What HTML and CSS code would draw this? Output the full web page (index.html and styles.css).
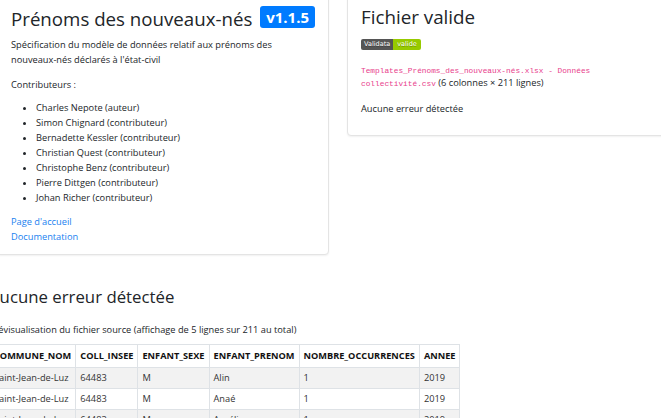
FILE: index.html
```html
<!DOCTYPE html>
<html lang="fr">
<head>
<meta charset="utf-8">
<title>Prénoms des nouveaux-nés</title>
<link rel="stylesheet" href="styles.css">
</head>
<body>
<div class="page">
  <div class="top">
    <section class="card card-left">
      <h1 class="title">Prénoms des nouveaux-nés <span class="version">v1.1.5</span></h1>
      <p class="desc">Spécification du modèle de données relatif aux prénoms des nouveaux-nés déclarés à l'état-civil</p>
      <p class="contrib">Contributeurs :</p>
      <ul class="people">
        <li>Charles Nepote (auteur)</li>
        <li>Simon Chignard (contributeur)</li>
        <li>Bernadette Kessler (contributeur)</li>
        <li>Christian Quest (contributeur)</li>
        <li>Christophe Benz (contributeur)</li>
        <li>Pierre Dittgen (contributeur)</li>
        <li>Johan Richer (contributeur)</li>
      </ul>
      <div class="links">
        <a href="#">Page d'accueil</a>
        <a href="#">Documentation</a>
      </div>
    </section>
    <section class="card card-right">
      <h2 class="status">Fichier valide</h2>
      <div class="shield"><span class="shield-label">Validata</span><span class="shield-value">valide</span></div>
      <p class="file"><code>Templates_Prénoms_des_nouveaux-nés.xlsx - Données collectivité.csv</code> (6 colonnes × 211 lignes)</p>
      <p class="ok">Aucune erreur détectée</p>
    </section>
  </div>
  <section class="report">
    <h2 class="report-title">Aucune erreur détectée</h2>
    <p class="preview">Prévisualisation du fichier source (affichage de 5 lignes sur 211 au total)</p>
    <table class="data">
      <thead>
        <tr><th>COMMUNE_NOM</th><th>COLL_INSEE</th><th>ENFANT_SEXE</th><th>ENFANT_PRENOM</th><th>NOMBRE_OCCURRENCES</th><th>ANNEE</th></tr>
      </thead>
      <tbody>
        <tr><td>Saint-Jean-de-Luz</td><td>64483</td><td>M</td><td>Alin</td><td>1</td><td>2019</td></tr>
        <tr><td>Saint-Jean-de-Luz</td><td>64483</td><td>M</td><td>Anaé</td><td>1</td><td>2019</td></tr>
        <tr><td>Saint-Jean-de-Luz</td><td>64483</td><td>M</td><td>Aurélien</td><td>1</td><td>2019</td></tr>
        <tr><td>Saint-Jean-de-Luz</td><td>64483</td><td>M</td><td>Axel</td><td>1</td><td>2019</td></tr>
        <tr><td>Saint-Jean-de-Luz</td><td>64483</td><td>M</td><td>Baptiste</td><td>1</td><td>2019</td></tr>
      </tbody>
    </table>
  </section>
</div>
</body>
</html>
```
FILE: styles.css
```css
html, body {
  margin: 0;
  background: #fff;
}
body {
  font-family: "Open Sans", "Noto Sans", sans-serif;
  font-size: 9.25px;
  line-height: 15px;
  color: #212529;
  overflow: hidden;
}
.page {
  margin: -4px 0 0 -12px;
  width: 720px;
}
.top {
  display: flex;
  align-items: flex-start;
  gap: 18px;
  padding-left: 8px;
}
.card {
  box-sizing: border-box;
  flex: none;
  background: #fff;
  border: 1px solid #e4e4e4;
  border-radius: 4px;
  box-shadow: 0 1px 2px rgba(0, 0, 0, 0.06);
}
.card-left {
  width: 333px;
  padding: 7px 13px 10.5px 14px;
}
.title {
  margin: 0;
  font-size: 18.7px;
  line-height: 30px;
  font-weight: 400;
}
.version {
  display: inline-block;
  margin-left: 3px;
  padding: 4px 6px 3px;
  font-size: 15px;
  line-height: 1;
  font-weight: 700;
  color: #fff;
  background: #007bff;
  border-radius: 3px;
  vertical-align: 3px;
}
.desc {
  margin: 3px 0 0;
}
.contrib {
  margin: 9.5px 0 0;
}
.people {
  margin: 8px 0 0;
  padding-left: 25px;
}
.links {
  margin-top: 9px;
}
.links a {
  display: block;
  color: #1a7ff0;
  text-decoration: none;
}
.card-right {
  width: 332px;
  padding: 7px 13px 19.5px 13px;
}
.status {
  margin: 0;
  font-size: 18.8px;
  line-height: 27px;
  font-weight: 400;
}
.shield {
  display: inline-flex;
  margin-top: 8px;
  height: 11px;
  font-family: "DejaVu Sans", Verdana, sans-serif;
  font-size: 6.5px;
  line-height: 11px;
  color: #fff;
  border-radius: 2px;
  overflow: hidden;
  vertical-align: top;
  text-shadow: 0 1px 0 rgba(1, 1, 1, 0.3);
}
.shield-label {
  padding: 0 3px;
  background: #555;
}
.shield-value {
  padding: 0 4px;
  background: #97ca00;
}
.file {
  margin: 12.5px 0 0;
  line-height: 13px;
}
.file code {
  font-family: "Liberation Mono", monospace;
  font-size: 7.8px;
  line-height: 1;
  color: #e83e8c;
}
.ok {
  margin: 12px 0 0;
}
.report {
  padding-left: 1px;
}
.report-title {
  margin: 30.5px 0 0;
  font-size: 16.8px;
  line-height: 22px;
  font-weight: 400;
}
.preview {
  margin: 14px 0 0;
}
.data {
  margin-top: 7.5px;
  border-collapse: collapse;
  color: #333;
}
.data th,
.data td {
  border: 1px solid #dee2e6;
  text-align: left;
  white-space: nowrap;
  line-height: 14px;
}
.data th {
  padding: 4px 4px;
  font-size: 9.2px;
  font-weight: 700;
  color: #111;
}
.data td {
  padding: 3px 4px;
}
.data tbody tr:nth-child(odd) {
  background: #f2f2f2;
}
```
